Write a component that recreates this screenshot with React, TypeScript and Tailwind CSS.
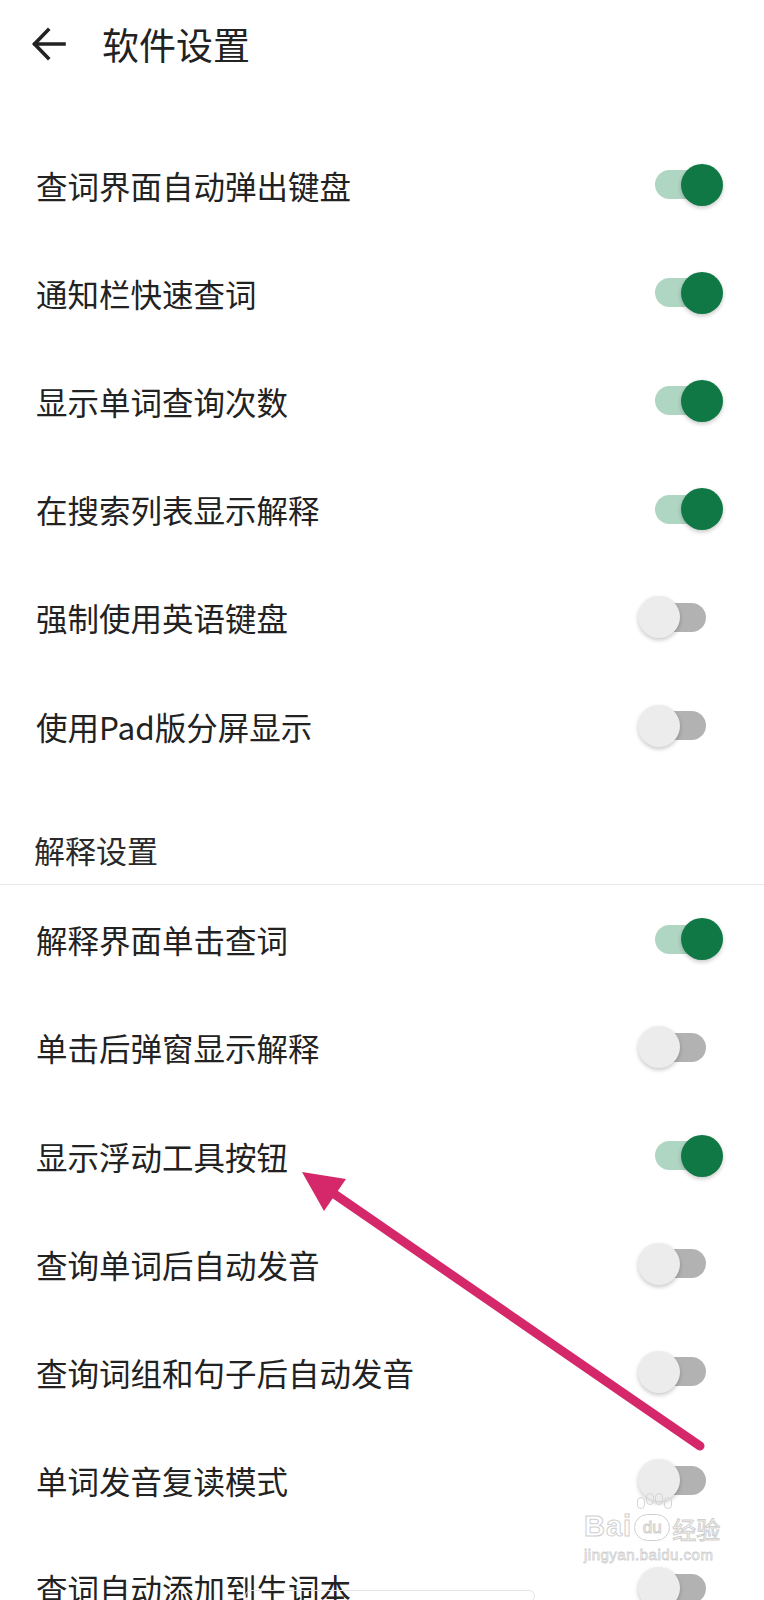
import React from 'react';

interface Setting {
  label: string;
  on: boolean;
}

const general: Setting[] = [
  { label: '查词界面自动弹出键盘', on: true },
  { label: '通知栏快速查词', on: true },
  { label: '显示单词查询次数', on: true },
  { label: '在搜索列表显示解释', on: true },
  { label: '强制使用英语键盘', on: false },
  { label: '使用Pad版分屏显示', on: false },
];

const explain: Setting[] = [
  { label: '解释界面单击查词', on: true },
  { label: '单击后弹窗显示解释', on: false },
  { label: '显示浮动工具按钮', on: true },
  { label: '查询单词后自动发音', on: false },
  { label: '查询词组和句子后自动发音', on: false },
  { label: '单词发音复读模式', on: false },
  { label: '查词自动添加到生词本', on: false },
];

function Toggle({ on }: { on: boolean }) {
  return (
    <div className="relative h-[29px] w-[51px] shrink-0">
      <div className={on ? 'h-full w-full rounded-full bg-[#afd6c2]' : 'h-full w-full rounded-full bg-[#b2b2b2]'} />
      <div
        className={
          on
            ? 'absolute left-[26px] top-1/2 h-[42px] w-[42px] -translate-y-1/2 rounded-full bg-[#0f7845] shadow-[0_2px_4px_rgba(0,0,0,0.22)]'
            : 'absolute left-[-17px] top-1/2 h-[42px] w-[42px] -translate-y-1/2 rounded-full bg-[#ececec] shadow-[0_2px_4px_rgba(0,0,0,0.22)]'
        }
      />
    </div>
  );
}

function Row({ item }: { item: Setting }) {
  return (
    <div className="flex h-[108.2px] items-center justify-between pl-[36px] pr-[58px]">
      <span className="text-[31.5px] leading-[40px] text-[#222222]">{item.label}</span>
      <Toggle on={item.on} />
    </div>
  );
}

export default function App() {
  return (
    <div className="relative h-[1600px] w-[764px] overflow-hidden bg-white font-['Noto_Sans_CJK_SC','Noto_Sans',sans-serif]">
      {/* top bar */}
      <div className="flex h-[88px] items-center">
        <svg className="ml-[31px] h-[36px] w-[36px]" viewBox="0 0 36 36" fill="none" stroke="#222222" strokeWidth="3.6" strokeLinecap="square">
          <path d="M4 18h29" />
          <path d="M17 4L3.5 18 17 32" strokeLinejoin="miter" />
        </svg>
        <h1 className="ml-[35px] text-[37px] font-normal leading-[44px] text-[#222222]">软件设置</h1>
      </div>

      <div className="pt-[42.5px]">
        {general.map((s) => (
          <Row key={s.label} item={s} />
        ))}
      </div>

      <div className="flex h-[105.5px] items-end border-b border-[#e8e8e8] pb-[14px] pl-[34px]">
        <span className="text-[31px] leading-[40px] text-[#2a2a2a]">解释设置</span>
      </div>

      <div>
        {explain.map((s) => (
          <Row key={s.label} item={s} />
        ))}
      </div>

      {/* faint bar at bottom edge */}
      <div className="absolute left-[245px] top-[1590px] h-[12px] w-[290px] rounded-full border border-[#e4e4e4]" />

      {/* watermark */}
      <div className="pointer-events-none absolute left-[584px] top-[1512px] flex flex-col items-start">
        <div className="flex items-end leading-none">
          <span className="text-[29px] font-bold tracking-[1px] text-transparent [-webkit-text-stroke:1px_#cfcfcf] font-['Liberation_Sans',sans-serif]">Bai</span>
          <span className="relative mx-[2px] flex h-[27px] w-[36px] items-center justify-center rounded-full border border-[#cfcfcf] text-[17px] text-transparent [-webkit-text-stroke:1px_#cfcfcf] font-['Liberation_Sans',sans-serif]">
            du
            <span className="absolute left-[2px] top-[-22px] flex gap-[1px]">
              <span className="mt-[4px] h-[12px] w-[8px] rounded-full border border-[#d4d4d4]" />
              <span className="h-[12px] w-[8px] rounded-full border border-[#d4d4d4]" />
              <span className="h-[12px] w-[8px] rounded-full border border-[#d4d4d4]" />
              <span className="mt-[4px] h-[12px] w-[8px] rounded-full border border-[#d4d4d4]" />
            </span>
          </span>
          <span className="text-[24px] text-transparent [-webkit-text-stroke:1px_#cfcfcf]">经验</span>
        </div>
        <span className="mt-[6px] text-[15px] leading-none tracking-[0.5px] text-transparent [-webkit-text-stroke:0.8px_#d0d0d0] font-['Liberation_Sans',sans-serif]">
          jingyan.baidu.com
        </span>
      </div>

      {/* annotation arrow */}
      <svg className="pointer-events-none absolute left-0 top-0 h-[1600px] w-[764px]" viewBox="0 0 764 1600">
        <line x1="700" y1="1446" x2="330" y2="1191" stroke="#d4286a" strokeWidth="9" strokeLinecap="round" />
        <polygon points="302,1172 346,1179 324,1211" fill="#d4286a" />
      </svg>
    </div>
  );
}
